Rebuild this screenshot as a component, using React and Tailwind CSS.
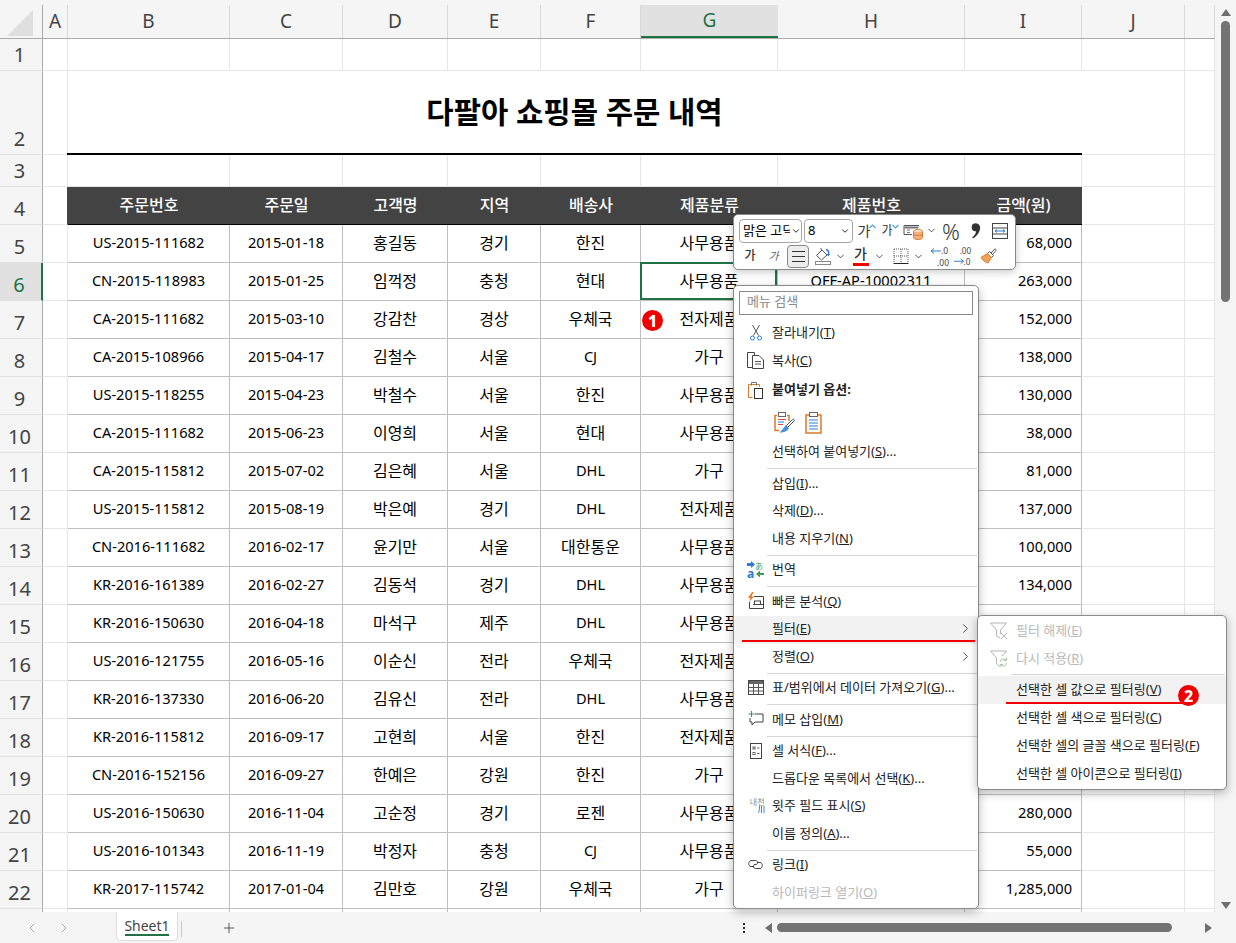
import React from "react";
import { ChevronLeft, ChevronRight, ChevronDown, Plus } from "lucide-react";

const cols = "grid grid-cols-[43px_25px_162px_113px_105px_93px_100px_137px_187px_117px_103px_30px]";
const letters = ["A", "B", "C", "D", "E", "F", "G", "H", "I", "J", ""];
const heads = ["주문번호", "주문일", "고객명", "지역", "배송사", "제품분류", "제품번호", "금액(원)"];

const rows = [
  [5, "US-2015-111682", "2015-01-18", "홍길동", "경기", "한진", "사무용품", "", "68,000"],
  [6, "CN-2015-118983", "2015-01-25", "임꺽정", "충청", "현대", "사무용품", "OFF-AP-10002311", "263,000"],
  [7, "CA-2015-111682", "2015-03-10", "강감찬", "경상", "우체국", "전자제품", "", "152,000"],
  [8, "CA-2015-108966", "2015-04-17", "김철수", "서울", "CJ", "가구", "", "138,000"],
  [9, "US-2015-118255", "2015-04-23", "박철수", "서울", "한진", "사무용품", "", "130,000"],
  [10, "CA-2015-111682", "2015-06-23", "이영희", "서울", "현대", "사무용품", "", "38,000"],
  [11, "CA-2015-115812", "2015-07-02", "김은혜", "서울", "DHL", "가구", "", "81,000"],
  [12, "US-2015-115812", "2015-08-19", "박은예", "경기", "DHL", "전자제품", "", "137,000"],
  [13, "CN-2016-111682", "2016-02-17", "윤기만", "서울", "대한통운", "사무용품", "", "100,000"],
  [14, "KR-2016-161389", "2016-02-27", "김동석", "경기", "DHL", "사무용품", "", "134,000"],
  [15, "KR-2016-150630", "2016-04-18", "마석구", "제주", "DHL", "사무용품", "", ""],
  [16, "US-2016-121755", "2016-05-16", "이순신", "전라", "우체국", "전자제품", "", ""],
  [17, "KR-2016-137330", "2016-06-20", "김유신", "전라", "DHL", "사무용품", "", ""],
  [18, "KR-2016-115812", "2016-09-17", "고현희", "서울", "한진", "전자제품", "", ""],
  [19, "CN-2016-152156", "2016-09-27", "한예은", "강원", "한진", "가구", "", ""],
  [20, "US-2016-150630", "2016-11-04", "고순정", "경기", "로젠", "사무용품", "", "280,000"],
  [21, "US-2016-101343", "2016-11-19", "박정자", "충청", "CJ", "사무용품", "", "55,000"],
  [22, "KR-2017-115742", "2017-01-04", "김만호", "강원", "우체국", "가구", "", "1,285,000"],
  ["", "", "", "", "", "", "", "", ""],
];

const RowHead = ({ n, active }) => (
  <div
    className={
      active
        ? "flex items-end justify-center pr-[3px] pb-[2px] bg-[#e1e1e1] text-[#217346] border-b border-b-[#e1e1e1] border-r-2 border-r-[#217346] text-[20px] leading-[27px]"
        : "flex items-end justify-center pr-[3px] pb-[2px] bg-[#f5f5f5] text-[#444] border-b border-b-[#e1e1e1] border-r border-r-[#ababab] text-[20px] leading-[27px]"
    }
  >
    {n}
  </div>
);

const Blank = () => <div className="border-r border-b border-[#e6e6e6]" />;

const BlankRow = ({ n, height }) => (
  <div className={`${cols} ${height}`}>
    <RowHead n={n} />
    <Blank /><Blank /><Blank /><Blank /><Blank /><Blank /><Blank /><Blank /><Blank /><Blank /><Blank />
  </div>
);

// korean runs a size larger than latin in the sheet font
const cellSize = (c) => (/[가-힣]/.test(c) ? "text-[16px]" : "text-[14.6px]");

const DataRow = ({ row }) => {
  const [n, ...cells] = row;
  return (
    <div className={`${cols} h-[38px]`}>
      <RowHead n={n} active={n === 6} />
      <Blank />
      {cells.map((c, i) => (
        <div
          key={i}
          className={
            i === 7
              ? `flex items-center justify-end pr-[9px] pb-[2px] border-r border-b border-[#bfbfbf] text-black ${cellSize(c)}`
              : `relative flex items-center justify-center pb-[2px] border-r border-b border-[#bfbfbf] text-black ${cellSize(c)}`
          }
        >
          {c}
          {n === 6 && i === 5 && (
            <div className="absolute -left-px -top-px right-0 bottom-0 border-2 border-[#217346]" />
          )}
        </div>
      ))}
      <Blank /><Blank />
    </div>
  );
};

const Sheet = () => (
  <div className="w-[1215px] h-[912px] overflow-hidden bg-white">
    <div className={`${cols} h-[39px] pt-[5px] bg-[#f5f5f5] border-b border-[#ababab]`}>
      <div className="flex items-center justify-center border-r border-[#ababab]">
        <svg width="30" height="30" viewBox="0 0 30 30">
          <path d="M27 3V29H1Z" fill="#dfdfdf" />
        </svg>
      </div>
      {letters.map((l, i) => (
        <div
          key={i}
          className={
            l === "G"
              ? "flex items-center justify-center bg-[#e1e1e1] border-b-2 border-[#217346] text-[#217346] text-[19px]"
              : "flex items-center justify-center border-r border-[#d9d9d9] text-[#444] text-[19px]"
          }
        >
          {l}
        </div>
      ))}
    </div>
    <BlankRow n={1} height="h-[32px]" />
    <div className={`${cols} h-[84px]`}>
      <RowHead n={2} />
      <Blank />
      <div className="col-span-8 -ml-px flex items-center justify-center border-b-2 border-black text-[29.7px] font-bold text-black">
        다팔아 쇼핑몰 주문 내역
      </div>
      <Blank /><Blank />
    </div>
    <BlankRow n={3} height="h-[32px]" />
    <div className={`${cols} h-[38px]`}>
      <RowHead n={4} />
      <div className="border-r border-r-[#434343] border-b border-b-[#e6e6e6]" />
      {heads.map((h) => (
        <div
          key={h}
          className="flex items-center justify-center pb-[2px] bg-[#434343] border-b border-black text-white text-[16px] font-medium"
        >
          {h}
        </div>
      ))}
      <Blank /><Blank />
    </div>
    {rows.map((r, i) => (
      <DataRow key={i} row={r} />
    ))}
  </div>
);

const Tri = ({ d }) => (
  <svg width="10" height="8" viewBox="0 0 10 8">
    <path d={d} fill="#6f6f6f" />
  </svg>
);

const VScroll = () => (
  <div className="w-[21px] h-[912px] bg-[#f5f5f5] flex flex-col items-center pt-[9px] pb-[2px]">
    <Tri d="M5 0L10 7H0Z" />
    <div className="mt-[4px] w-[9px] h-[281px] rounded-full bg-[#737373]" />
    <div className="mt-auto">
      <Tri d="M0 0H10L5 7Z" />
    </div>
  </div>
);

const TabBar = () => (
  <div className="flex items-start h-[31px] bg-[#f5f5f5] text-[#444]">
    <div className="flex items-center h-[31px] w-[116px] pl-[24px] gap-[16px] text-[#a6a6a6]">
      <ChevronLeft size={16} strokeWidth={1.5} />
      <ChevronRight size={16} strokeWidth={1.5} />
    </div>
    <div className="relative flex justify-center w-[62px] h-[29px] pt-[4px] bg-white rounded-b-[5px] border-x border-b border-[#dcdcdc] text-[14px] leading-[20px]">
      Sheet1
      <div className="absolute left-[8px] right-[8px] bottom-[4px] h-[2px] bg-[#217346]" />
    </div>
    <div className="ml-[3px] mt-[9px] w-px h-[16px] bg-[#c8c8c8]" />
    <div className="flex items-center justify-center ml-[39px] h-[31px] w-[16px]">
      <Plus size={16} strokeWidth={1.3} />
    </div>
    <div className="flex items-center h-[31px] ml-[505px] text-[#333]">
      <svg width="4" height="12" viewBox="0 0 4 12" className="shrink-0">
        <path d="M1 1h2v2H1zM1 5h2v2H1zM1 9h2v2H1z" fill="#333" />
      </svg>
      <svg width="7" height="10" viewBox="0 0 7 10" className="ml-[19px] shrink-0"><path d="M7 0V10L0 5Z" fill="#6f6f6f" /></svg>
      <div className="ml-[5px] w-[395px] h-[9px] rounded-full bg-[#737373]" />
      <svg width="7" height="10" viewBox="0 0 7 10" className="ml-[33px] shrink-0"><path d="M0 0V10L7 5Z" fill="#6f6f6f" /></svg>
    </div>
  </div>
);

// toolbar bits
const Chev = ({ w = "w-[14px]" }) => (
  <div className={`flex justify-center ${w}`}>
    <ChevronDown size={11} strokeWidth={2} color="#444" />
  </div>
);

const Slot = ({ w, children }) => <div className={`flex items-center justify-center h-[23px] ${w}`}>{children}</div>;

const FormatTableIcon = () => (
  <svg width="21" height="18" viewBox="0 0 21 18" fill="none">
    <path d="M1 3.5H16M1 3.5V12.5H9" stroke="#555" />
    <path d="M1.5 4.5H15.5V6.5H1.5Z" fill="#777" />
    <path d="M4 8h3M4 10.5h3" stroke="#777" />
    <ellipse cx="15" cy="9.5" rx="4.5" ry="2" fill="#fff" stroke="#d9792a" />
    <path d="M10.5 9.5V15.5C10.5 16.6 12.5 17.5 15 17.5S19.5 16.6 19.5 15.5V9.5" fill="#f4b183" stroke="#d9792a" />
    <path d="M10.5 12.5C11 13.7 19 13.7 19.5 12.5" stroke="#d9792a" />
  </svg>
);

const WrapIcon = () => (
  <svg width="16" height="16" viewBox="0 0 16 16" fill="none">
    <rect x="0.5" y="0.5" width="15" height="15" stroke="#444" />
    <path d="M0.5 5H15.5M0.5 11H15.5" stroke="#444" />
    <path d="M3 8H13M3 8L5 6.5M3 8L5 9.5M13 8L11 6.5M13 8L11 9.5" stroke="#2b7cd3" />
  </svg>
);

const FillIcon = () => (
  <svg width="17" height="18" viewBox="0 0 17 18" fill="none">
    <path d="M1.5 8.5L7 3L12 8L6.5 13Z" stroke="#555" fill="#fff" />
    <path d="M7 3L5.5 1" stroke="#555" />
    <path d="M11 2.5C13.5 3 14 5.5 13.5 7" stroke="#2b7cd3" strokeWidth="1.5" />
    <path d="M11.5 7H15L13.3 9.5Z" fill="#2b7cd3" />
    <rect x="0.5" y="14.5" width="15" height="3" stroke="#888" fill="#fff" />
  </svg>
);

const BorderIcon = () => (
  <svg width="16" height="16" viewBox="0 0 16 16" fill="none">
    <path d="M1 1H15M1 1V15M15 1V15M8 1V15M1 8H15" stroke="#555" strokeDasharray="1 1" />
    <path d="M0.5 15.5H15.5" stroke="#222" />
  </svg>
);

const BrushIcon = () => (
  <svg width="18" height="18" viewBox="0 0 18 18" fill="none">
    <path d="M11 6L14.5 2.2C15.2 1.5 16.7 2.8 16 3.6L12.5 7.5" stroke="#555" fill="#fff" />
    <path d="M9.5 4.5L13.5 8.5L11.5 10.5L7.5 6.5Z" stroke="#555" fill="#fff" />
    <path d="M7.5 6.5L11.5 10.5L8 16C5.5 15.5 2.5 13 1 10.5Z" fill="#f0a35a" stroke="#d9792a" />
  </svg>
);

const DecIcon = ({ flip }) => (
  <svg width="23" height="24" viewBox="0 0 23 24" fill="none">
    <text x={flip ? 7 : 11} y="10" fontSize="8.5" fill="#444">{flip ? ".00" : ".0"}</text>
    <text x={flip ? 11 : 7} y="21.8" fontSize="8.5" fill="#444">{flip ? ".0" : ".00"}</text>
    {flip ? (
      <path d="M1 17.5H11M11 17.5L8 15M11 17.5L8 20" stroke="#2b7cd3" />
    ) : (
      <path d="M1 7H11M1 7L4 4.5M1 7L4 9.5" stroke="#2b7cd3" />
    )}
  </svg>
);

const Caret = ({ d }) => (
  <svg width="7" height="5" viewBox="0 0 7 5" fill="none" className="-mt-[9px] -ml-px shrink-0">
    <path d={d} stroke="#5b9bd5" strokeWidth="1.2" />
  </svg>
);

const CommaIcon = () => (
  <svg width="10" height="16" viewBox="0 0 10 16">
    <path d="M2 1C4 -0.2 8 0 9 3.5C9.8 7.5 6.5 13 2 15.5L1.2 14.5C3.5 12.5 5 10.5 5 8.2C3 8.8 0.7 7.5 0.7 4.5C0.7 3 1.2 1.6 2 1Z" fill="#333" />
  </svg>
);

const MiniBar = () => (
  <div className="absolute left-[733px] top-[214px] w-[283px] h-[56px] bg-white border border-[#8a8a8a] rounded-[5px] shadow-[0_2px_8px_rgba(0,0,0,0.22)] z-30 text-[#333]">
    <div className="flex items-center h-[28px] pl-[5px] pt-[3px]">
      <div className="flex items-center justify-between w-[63px] h-[24px] pl-[3px] border border-[#a6a6a6] rounded-[4px] text-[13px] text-black overflow-hidden">
        <span className="whitespace-nowrap overflow-hidden w-[47px]">맑은 고딕</span>
        <ChevronDown size={10} strokeWidth={2} className="shrink-0" />
      </div>
      <div className="flex items-center justify-between w-[49px] ml-[2px] h-[24px] pl-[3px] pr-[2px] border border-[#a6a6a6] rounded-[4px] text-[13px] text-black">
        8
        <ChevronDown size={10} strokeWidth={2} />
      </div>
      <Slot w="w-[26px] pl-[2px]">
        <span className="text-[14px] leading-none">가</span>
        <Caret d="M0.5 4L3.5 1L6.5 4" />
      </Slot>
      <Slot w="w-[22px]">
        <span className="text-[12px] leading-none">가</span>
        <Caret d="M0.5 1L3.5 4L6.5 1" />
      </Slot>
      <Slot w="w-[25px]"><FormatTableIcon /></Slot>
      <Chev w="w-[11px]" />
      <Slot w="w-[28px]"><span className="text-[22px] font-light leading-none">%</span></Slot>
      <Slot w="w-[22px]"><CommaIcon /></Slot>
      <Slot w="w-[26px]"><WrapIcon /></Slot>
    </div>
    <div className="flex items-center h-[26px] pl-[5px]">
      <Slot w="w-[22px]"><span className="text-[12px] font-medium">가</span></Slot>
      <Slot w="w-[25px]"><span className="text-[11px] italic text-[#666]">가</span></Slot>
      <div className="flex flex-col items-center justify-center gap-[4px] ml-px w-[22px] h-[23px] bg-[#ededed] border border-[#8a8a8a] rounded-[4px]">
        <div className="w-[13px] h-px bg-[#333]" />
        <div className="w-[13px] h-px bg-[#333]" />
        <div className="w-[13px] h-px bg-[#333]" />
      </div>
      <Slot w="w-[20px] ml-[4px]"><FillIcon /></Slot>
      <Chev />
      <div className="relative flex justify-center ml-[3px] w-[21px] h-[23px] text-[14px] font-medium leading-[18px]">
        가
        <div className="absolute left-[3px] bottom-[2px] w-[16px] h-[3px] bg-[#f00000]" />
      </div>
      <Chev w="w-[16px]" />
      <Slot w="w-[20px] ml-[4px]"><BorderIcon /></Slot>
      <Chev />
      <Slot w="w-[24px] ml-[4px]"><DecIcon /></Slot>
      <Slot w="w-[22px]"><DecIcon flip /></Slot>
      <Slot w="w-[26px] ml-px"><BrushIcon /></Slot>
    </div>
  </div>
);

// context menu icons
const CutIcon = () => (
  <svg width="14" height="17" viewBox="0 0 14 17" fill="none">
    <path d="M3.5 1L9.5 11.5M10.5 1L4.5 11.5" stroke="#555" />
    <circle cx="3.5" cy="14" r="2" stroke="#2b7cd3" />
    <circle cx="10.5" cy="14" r="2" stroke="#2b7cd3" />
  </svg>
);

const CopyIcon = () => (
  <svg width="17" height="17" viewBox="0 0 17 17" fill="none">
    <path d="M5.5 15.5H0.5V0.5H7.5V3" stroke="#444" />
    <path d="M5.5 3.5H12L16.5 8V16.5H5.5Z" stroke="#444" fill="#fff" />
    <path d="M8 9.5H14M8 12H14" stroke="#555" />
  </svg>
);

const PasteSmallIcon = () => (
  <svg width="16" height="17" viewBox="0 0 16 17" fill="none">
    <path d="M4.5 15.5H0.5V2.5H11.5V5" stroke="#d9792a" />
    <path d="M3.5 3.5V0.5H8.5V3.5" stroke="#777" />
    <rect x="6.5" y="6.5" width="8" height="10" stroke="#333" fill="#fff" />
  </svg>
);

const PasteBrushIcon = () => (
  <svg width="21" height="24" viewBox="0 0 21 24" fill="none">
    <path d="M3 5.5H1V20.5H5M13 5.5H15V11" stroke="#d9792a" strokeWidth="1.5" />
    <rect x="4.5" y="2.5" width="7" height="4" stroke="#666" fill="#fff" />
    <path d="M4 9.5H12" stroke="#e04a3c" />
    <path d="M4 12H10" stroke="#2b7cd3" />
    <path d="M4 14.5H9" stroke="#e04a3c" />
    <path d="M12 16L18.5 9.5C19.5 8.5 21 10 20 11L14 17" stroke="#555" fill="#fff" />
    <path d="M12 15L15 18C13 22 8 23 5.5 22.5C8 21 9 18 12 15Z" fill="#4a90d9" />
  </svg>
);

const PasteListIcon = () => (
  <svg width="17" height="23" viewBox="0 0 17 23" fill="none">
    <rect x="1" y="4" width="15" height="18" stroke="#d9792a" strokeWidth="1.5" />
    <rect x="4.5" y="1.5" width="8" height="4" stroke="#666" fill="#fff" />
    <path d="M4 9H13M4 12H13M4 15H13M4 18H13" stroke="#2b7cd3" />
  </svg>
);

const TranslateIcon = () => (
  <svg width="17" height="18" viewBox="0 0 17 18" className="overflow-visible">
    <path d="M0 2H4V0L8 3.5L4 7V5H0Z" fill="#2b7cd3" />
    <text x="0" y="17" fontSize="12" fontWeight="700" fill="#2b7cd3">a</text>
    <text x="8" y="8" fontSize="8" fill="#3f9a55">あ</text>
    <path d="M17 14H13V16.5L9 13L13 9.5V12H17Z" fill="#3f9a55" />
  </svg>
);

const QuickIcon = () => (
  <svg width="17" height="18" viewBox="0 0 17 18" fill="none">
    <path d="M7 4.5H16.5V16.5H2.5V10" stroke="#444" />
    <path d="M6 12.5H16" stroke="#444" />
    <rect x="7.5" y="9" width="6" height="3.5" stroke="#444" />
    <path d="M5 0L1 6H3.5L2 10L7 4.5H4.5L6.5 0Z" fill="#e8762b" />
  </svg>
);

const TableIcon = () => (
  <svg width="16" height="15" viewBox="0 0 16 15" fill="none">
    <rect x="0.5" y="0.5" width="15" height="14" stroke="#444" />
    <rect x="1" y="1" width="14" height="3" fill="#666" />
    <path d="M0.5 7.5H15.5M0.5 11H15.5M5.5 4V14.5M10.5 4V14.5" stroke="#555" />
  </svg>
);

const MemoIcon = () => (
  <svg width="16" height="16" viewBox="0 0 16 16" fill="none">
    <path d="M7 3H15V11H7L4 14V11H2V7" stroke="#444" />
    <path d="M3.5 0V6M0.5 3H6.5" stroke="#2f9e44" />
  </svg>
);

const FormatCellIcon = () => (
  <svg width="12" height="16" viewBox="0 0 12 16" fill="none">
    <rect x="0.5" y="0.5" width="11" height="15" stroke="#444" />
    <rect x="3" y="4" width="2" height="2" stroke="#666" />
    <rect x="3" y="9.5" width="2" height="2" stroke="#666" />
    <path d="M7 5H9.5M7 10.5H9.5" stroke="#666" />
  </svg>
);

const PhoneticIcon = () => (
  <div className="flex flex-col items-end w-[18px] -mt-[2px] text-[#8a8a8a] text-[8px] leading-[9px]">
    <span className="whitespace-nowrap">내천</span>
    <svg width="7" height="7" viewBox="0 0 7 7" fill="none">
      <path d="M1.5 0C1.5 3 1.2 5 0.5 7M3.5 0V7M6 0V7" stroke="#2b7cd3" strokeWidth="0.9" />
    </svg>
  </div>
);

const LinkIcon = () => (
  <svg width="17" height="11" viewBox="0 0 17 11" fill="none">
    <path d="M7 7.5H4C1 7.5 1 2 4 1.5H8.5C11 1.5 11.5 5 9 5.5H7" stroke="#444" />
    <path d="M10 3.5H13C16 3.5 16 9.5 13 9.5H8.5C6 9.5 5.5 6 8 5.5" stroke="#444" />
  </svg>
);

const FilterClearIcon = () => (
  <svg width="18" height="18" viewBox="0 0 18 18" fill="none">
    <path d="M0.5 1H16.5L10.5 8V12M10 16L6.5 14V8L0.5 1" stroke="#b5b5b5" />
    <path d="M11 11L17 17M17 11L11 17" stroke="#b5b5b5" />
  </svg>
);

const FilterAgainIcon = () => (
  <svg width="18" height="18" viewBox="0 0 18 18" fill="none">
    <path d="M0.5 1H16.5L12 6M9 16L6.5 14V8L0.5 1" stroke="#b5b5b5" />
    <path d="M10 12A3.5 3.5 0 0 1 16 10M16.5 13A3.5 3.5 0 0 1 10.5 15" stroke="#a9c4a9" />
    <path d="M16.5 7.5V10.5H13.5M10 17.5V14.5H13" stroke="#a9c4a9" />
  </svg>
);

const Sep = () => (
  <div className="flex items-center h-[4px] ml-[33px] mr-px">
    <div className="w-full h-px bg-[#d4d4d4]" />
  </div>
);

const MenuItem = ({ icon, arrow, disabled, hot, children }) => (
  <div
    className={`flex items-center h-[27.5px] pb-[2px] text-[13px] whitespace-nowrap ${hot ? "bg-[#f2f2f2]" : ""} ${
      disabled ? "text-[#b9b9b9]" : "text-[#222]"
    }`}
  >
    <div className="flex items-center justify-center w-[38px] pl-[5px] shrink-0">{icon}</div>
    <span>{children}</span>
    {arrow && <ChevronRight size={15} strokeWidth={1.4} className="ml-auto mr-[5px] text-[#333]" />}
  </div>
);

const ContextMenu = () => (
  <div className="absolute left-[733px] top-[285px] w-[246px] h-[624px] pt-[5px] bg-white border border-[#8a8a8a] rounded-[5px] shadow-[0_3px_10px_rgba(0,0,0,0.28)] z-30">
    <div className="mx-[5px] h-[24px] pl-[7px] pb-[2px] flex items-center border border-[#8a8a8a] text-[13px] text-[#8a8a8a]">
      메뉴 검색
    </div>
    <div className="h-[5px]" />
    <MenuItem icon={<CutIcon />}>잘라내기(<u>T</u>)</MenuItem>
    <MenuItem icon={<CopyIcon />}>복사(<u>C</u>)</MenuItem>
    <div className="flex items-center h-[30px] text-[13px] font-bold text-[#222]">
      <div className="flex items-center justify-center w-[38px] pl-[5px]"><PasteSmallIcon /></div>
      붙여넣기 옵션:
    </div>
    <div className="flex items-center gap-[10px] h-[34px] pl-[40px]">
      <PasteBrushIcon />
      <PasteListIcon />
    </div>
    <MenuItem>선택하여 붙여넣기(<u>S</u>)...</MenuItem>
    <Sep />
    <MenuItem>삽입(<u>I</u>)...</MenuItem>
    <MenuItem>삭제(<u>D</u>)...</MenuItem>
    <MenuItem>내용 지우기(<u>N</u>)</MenuItem>
    <Sep />
    <MenuItem icon={<TranslateIcon />}>번역</MenuItem>
    <Sep />
    <MenuItem icon={<QuickIcon />}>빠른 분석(<u>Q</u>)</MenuItem>
    <MenuItem hot arrow>필터(<u>E</u>)</MenuItem>
    <MenuItem arrow>정렬(<u>O</u>)</MenuItem>
    <Sep />
    <MenuItem icon={<TableIcon />}>표/범위에서 데이터 가져오기(<u>G</u>)...</MenuItem>
    <Sep />
    <MenuItem icon={<MemoIcon />}>메모 삽입(<u>M</u>)</MenuItem>
    <Sep />
    <MenuItem icon={<FormatCellIcon />}>셀 서식(<u>F</u>)...</MenuItem>
    <MenuItem>드롭다운 목록에서 선택(<u>K</u>)...</MenuItem>
    <MenuItem icon={<PhoneticIcon />}>윗주 필드 표시(<u>S</u>)</MenuItem>
    <MenuItem>이름 정의(<u>A</u>)...</MenuItem>
    <Sep />
    <MenuItem icon={<LinkIcon />}>링크(<u>I</u>)</MenuItem>
    <MenuItem disabled>하이퍼링크 열기(<u>O</u>)</MenuItem>
  </div>
);

const SubItem = ({ icon, disabled, hot, children }) => (
  <div
    className={`flex items-center h-[28px] text-[13px] whitespace-nowrap ${hot ? "bg-[#f2f2f2]" : ""} ${
      disabled ? "text-[#b9b9b9]" : "text-[#222]"
    }`}
  >
    <div className="flex items-center justify-center w-[38px] pl-[4px] shrink-0">{icon}</div>
    <span>{children}</span>
  </div>
);

const SubMenu = () => (
  <div className="absolute left-[977px] top-[615px] w-[250px] h-[175px] pt-px bg-white border border-[#8a8a8a] rounded-[5px] shadow-[0_3px_10px_rgba(0,0,0,0.28)] z-40">
    <SubItem disabled icon={<FilterClearIcon />}>필터 해제(<u>E</u>)</SubItem>
    <SubItem disabled icon={<FilterAgainIcon />}>다시 적용(<u>R</u>)</SubItem>
    <div className="flex items-center h-[3px] ml-[33px] mr-px">
      <div className="w-full h-px bg-[#d4d4d4]" />
    </div>
    <SubItem hot>선택한 셀 값으로 필터링(<u>V</u>)</SubItem>
    <SubItem>선택한 셀 색으로 필터링(<u>C</u>)</SubItem>
    <SubItem>선택한 셀의 글꼴 색으로 필터링(<u>F</u>)</SubItem>
    <SubItem>선택한 셀 아이콘으로 필터링(<u>I</u>)</SubItem>
  </div>
);

const Badge = ({ pos, children }) => (
  <div className={`absolute ${pos} flex items-center justify-center w-[21px] h-[21px] rounded-full bg-[#f00000] text-white text-[16px] font-extrabold leading-none z-50`}>
    {children}
  </div>
);

export default function App() {
  return (
    <div className="relative w-[1236px] h-[943px] overflow-hidden bg-white font-['Noto_Sans','Noto_Sans_CJK_KR',sans-serif]">
      <div className="flex">
        <Sheet />
        <VScroll />
      </div>
      <TabBar />
      <MiniBar />
      <ContextMenu />
      <SubMenu />
      <div className="absolute left-[742px] top-[640px] w-[233px] h-[2px] bg-[#f00000] z-50" />
      <div className="absolute left-[1006px] top-[702px] w-[177px] h-[2px] bg-[#f00000] z-50" />
      <Badge pos="left-[642px] top-[310px]">1</Badge>
      <Badge pos="left-[1178px] top-[685px]">2</Badge>
    </div>
  );
}
